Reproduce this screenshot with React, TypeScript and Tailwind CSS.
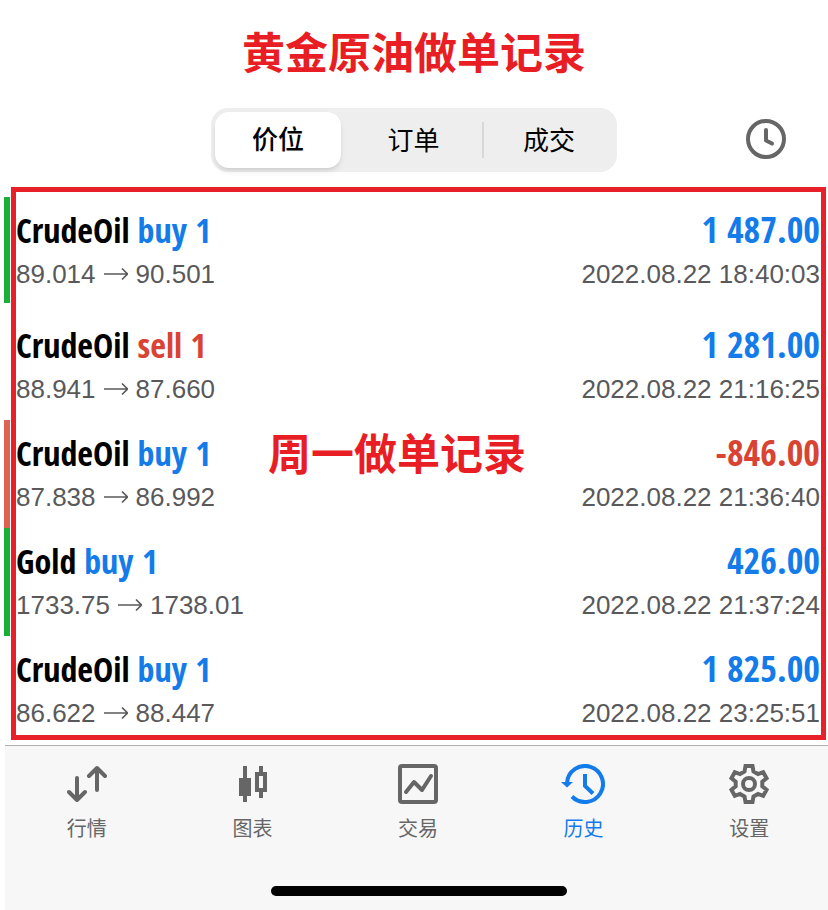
import { clsx } from 'clsx';
import type { ReactNode } from 'react';

type Deal = {
  symbol: string;
  side: 'buy' | 'sell';
  volume: number;
  open: string;
  close: string;
  profit: string;
  time: string;
  mark?: 'profit' | 'loss';
};

const DEALS: Deal[] = [
  {
    symbol: 'CrudeOil',
    side: 'buy',
    volume: 1,
    open: '89.014',
    close: '90.501',
    profit: '1 487.00',
    time: '2022.08.22 18:40:03',
    mark: 'profit',
  },
  {
    symbol: 'CrudeOil',
    side: 'sell',
    volume: 1,
    open: '88.941',
    close: '87.660',
    profit: '1 281.00',
    time: '2022.08.22 21:16:25',
  },
  {
    symbol: 'CrudeOil',
    side: 'buy',
    volume: 1,
    open: '87.838',
    close: '86.992',
    profit: '-846.00',
    time: '2022.08.22 21:36:40',
    mark: 'loss',
  },
  {
    symbol: 'Gold',
    side: 'buy',
    volume: 1,
    open: '1733.75',
    close: '1738.01',
    profit: '426.00',
    time: '2022.08.22 21:37:24',
    mark: 'profit',
  },
  {
    symbol: 'CrudeOil',
    side: 'buy',
    volume: 1,
    open: '86.622',
    close: '88.447',
    profit: '1 825.00',
    time: '2022.08.22 23:25:51',
  },
];

const SEGMENTS = ['价位', '订单', '成交'];

function ClockIcon() {
  return (
    <svg
      className="size-10"
      viewBox="0 0 40 40"
      fill="none"
      stroke="currentColor"
      strokeWidth="4"
      strokeLinecap="round"
      strokeLinejoin="round"
    >
      <circle cx="20" cy="20" r="18" />
      <path d="M20 11v10.5l6 3" />
    </svg>
  );
}

function QuotesIcon() {
  return (
    <svg
      className="size-10"
      viewBox="0 0 40 40"
      fill="none"
      stroke="currentColor"
      strokeWidth="4"
      strokeLinecap="round"
      strokeLinejoin="round"
    >
      <path d="M10 14v22M2 28l8 8 8-8" />
      <path d="M30 26V4M22 12l8-8 8 8" />
    </svg>
  );
}

function ChartIcon() {
  return (
    <svg className="size-10" viewBox="0 0 40 40" fill="currentColor">
      <path d="M11 2h4v12h4v18h-4v6h-4v-6H7V14h4z" />
      <path
        fillRule="evenodd"
        d="M27 2h4v6h4v20h-4v6h-4v-6h-4V8h4zM27 12v12h4V12z"
      />
    </svg>
  );
}

function TradeIcon() {
  return (
    <svg
      className="size-10"
      viewBox="0 0 40 40"
      fill="none"
      stroke="currentColor"
      strokeWidth="4"
      strokeLinecap="round"
      strokeLinejoin="round"
    >
      <rect x="2" y="2" width="36" height="36" rx="2" />
      <path d="M8 28l8-10 8 8 9-14" />
    </svg>
  );
}

function HistoryIcon() {
  return (
    <svg
      className="mr-[2px] h-10 w-11"
      viewBox="0 0 44 40"
      fill="none"
      stroke="currentColor"
      strokeWidth="4"
    >
      <path d="M6 19A18 18 0 1 1 11 32.5" />
      <path d="M24 10v12l8 7.5" />
      <path d="M0 18h12l-6 5.5z" fill="currentColor" stroke="none" />
    </svg>
  );
}

function SettingsIcon() {
  return (
    <svg
      className="size-10"
      viewBox="0 0 40 40"
      fill="none"
      stroke="currentColor"
      strokeWidth="4"
    >
      <path d="M16.5 2h7l1 5.5 4.5 2.6 5.2-1.9 3.4 6-4.3 3.6v4.4l4.3 3.6-3.4 6-5.2-1.9-4.5 2.6-1 5.5h-7l-1-5.5-4.5-2.6-5.2 1.9-3.4-6 4.3-3.6v-4.4l-4.3-3.6 3.4-6 5.2 1.9 4.5-2.6z" />
      <circle cx="20" cy="20" r="6" />
    </svg>
  );
}

function ArrowIcon() {
  return (
    <svg
      className="h-4 w-6"
      viewBox="0 0 24 16"
      fill="none"
      stroke="currentColor"
      strokeWidth="1.6"
    >
      <path d="M0 8h23.5M18 2.5L23.5 8 18 13.5" />
    </svg>
  );
}

const TABS: { label: string; icon: ReactNode; active?: boolean }[] = [
  { label: '行情', icon: <QuotesIcon /> },
  { label: '图表', icon: <ChartIcon /> },
  { label: '交易', icon: <TradeIcon /> },
  { label: '历史', icon: <HistoryIcon />, active: true },
  { label: '设置', icon: <SettingsIcon /> },
];

function DealRow({ deal }: { deal: Deal }) {
  return (
    <li className="flex h-[108px] pr-2 pl-1 first:mb-[9px] first:h-[106px]">
      <div
        className={clsx(
          'mr-[6px] w-[6px] shrink-0',
          deal.mark === 'profit' && 'bg-[#1aaf36]',
          deal.mark === 'loss' && 'bg-[#dd6353]',
        )}
      />
      <div className="flex grow flex-col pt-[13px]">
        <div className="flex justify-between font-['Liberation_Sans_Narrow','Open_Sans_Condensed','Roboto_Condensed',sans-serif] text-[34px] leading-10 font-bold">
          <span className="flex gap-2">
            {deal.symbol}
            <span
              className={
                deal.side === 'buy' ? 'text-[#137bea]' : 'text-[#d94334]'
              }
            >
              {deal.side} {deal.volume}
            </span>
          </span>
          <span
            className={clsx(
              'text-[36px]',
              deal.profit.startsWith('-') ? 'text-[#d94334]' : 'text-[#137bea]',
            )}
          >
            {deal.profit}
          </span>
        </div>
        <div className="flex justify-between pt-2 text-[26px] leading-8 text-[#59595b]">
          <span className="flex items-center gap-2">
            {deal.open}
            <ArrowIcon />
            {deal.close}
          </span>
          <time>{deal.time}</time>
        </div>
      </div>
    </li>
  );
}

export default function App() {
  return (
    <div className="flex min-h-screen flex-col overflow-hidden bg-white font-['Liberation_Sans','Noto_Sans_CJK_SC',sans-serif] text-black">
      <h1 className="pt-[22px] text-center text-[43px] leading-[64px] font-bold text-[#e91e25]">
        黄金原油做单记录
      </h1>

      <header className="grid grid-cols-[1fr_406px_1fr] items-center pt-[22px]">
        <div
          role="tablist"
          className="col-start-2 grid h-16 grid-cols-[126px_141px_1fr] items-center rounded-[17px] bg-[#eeeeee] p-1"
        >
          {SEGMENTS.map((segment, i) => (
            <button
              key={segment}
              type="button"
              role="tab"
              aria-selected={i === 0}
              className={clsx(
                'text-[26px]',
                i === 0 && 'h-14 rounded-[14px] bg-white font-medium shadow-md',
                i === 1 && 'h-9 pl-1',
                i === 2 && 'h-9 border-l-2 border-[#d8d8d9] pl-px',
              )}
            >
              {segment}
            </button>
          ))}
        </div>
        <button
          type="button"
          aria-label="选择时段"
          className="mr-[42px] mb-[2px] justify-self-end text-[#666666]"
        >
          <ClockIcon />
        </button>
      </header>

      <main className="relative pt-[25px]">
        <ul>
          {DEALS.map(deal => (
            <DealRow key={deal.time} deal={deal} />
          ))}
        </ul>
        {/* markup drawn over the list */}
        <div className="pointer-events-none absolute top-[15px] right-[2px] bottom-[4px] left-[11px] border-[5px] border-[#e8202a] pt-[231px] pl-[252px] text-[43px] leading-[64px] font-bold text-[#e91e25]">
          周一做单记录
        </div>
      </main>

      <nav className="mt-px ml-[5px] flex grow flex-col border-t border-[#b0b0b2] bg-[#f7f7f7]">
        <div className="-mr-1 -ml-px grid grid-cols-5 pt-[18px]">
          {TABS.map(tab => (
            <a
              key={tab.label}
              href="#"
              aria-current={tab.active ? 'page' : undefined}
              className={clsx(
                'flex flex-col items-center gap-[10px] text-[20px] leading-[30px]',
                tab.active ? 'text-[#137bea]' : 'text-[#666666]',
              )}
            >
              {tab.icon}
              {tab.label}
            </a>
          ))}
        </div>
        <div className="mt-auto mb-[14px] ml-[266px] h-[10px] w-[296px] rounded-full bg-black" />
      </nav>
    </div>
  );
}
